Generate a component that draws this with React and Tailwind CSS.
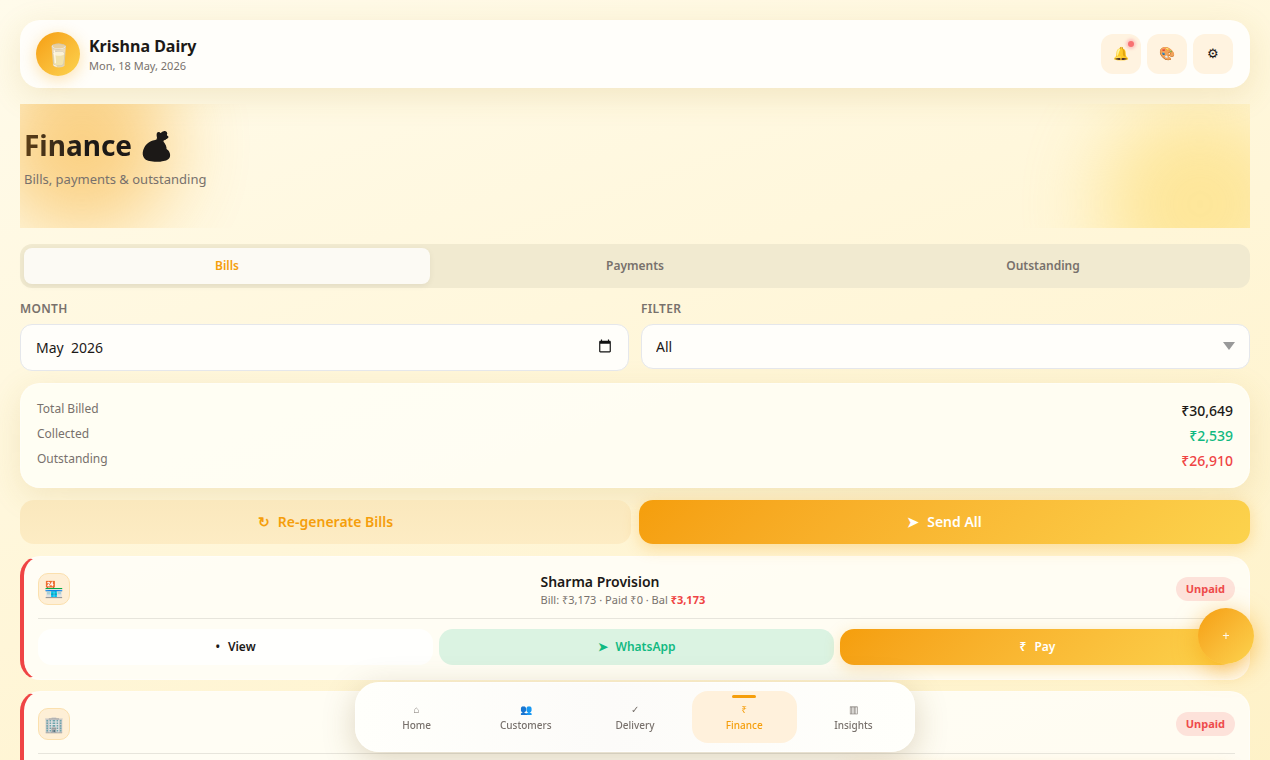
import React, { useState } from 'react';

const tabs = ['Bills', 'Payments', 'Outstanding'];

const totals = [
    { label: 'Total Billed', value: '₹30,649', color: 'text-[#1c1917]' },
    { label: 'Collected', value: '₹2,539', color: 'text-[#10b981]' },
    { label: 'Outstanding', value: '₹26,910', color: 'text-[#ef4444]' },
];

const bills = [
    { id: 1, icon: '🏪', name: 'Sharma Provision', bill: '₹3,173', paid: '₹0', balance: '₹3,173' },
    { id: 2, icon: '🏢' },
];

const navItems = [
    { icon: '⌂', label: 'Home' },
    { icon: '👥', label: 'Customers' },
    { icon: '✓', label: 'Delivery' },
    { icon: '₹', label: 'Finance', active: true },
    { icon: '▥', label: 'Insights' },
];

const Header = () => (
    <header className="flex items-center justify-between rounded-[20px] bg-[#fffefa] py-3 pl-4 pr-[17px] shadow-[0_8px_32px_rgba(180,140,40,0.16)]">
        <div className="flex items-center gap-[9px]">
            <div className="flex size-11 items-center justify-center rounded-full bg-linear-135 from-[#f59e0b] to-[#fcd34d] text-[22px] shadow-[0_4px_16px_rgba(245,158,11,0.3)]">
                <span className="opacity-90">🥛</span>
            </div>
            <div>
                <div className="text-base leading-6 font-bold">Krishna Dairy</div>
                <div className="text-[11px] leading-4 text-[#78716c]">Mon, 18 May, 2026</div>
            </div>
        </div>
        <div className="flex gap-1.5">
            <button aria-label="Notifications" className="relative size-10 rounded-xl bg-[#fff3e0] text-[13px]">
                🔔
                <span className="absolute top-[7px] right-[7px] size-1.5 rounded-full bg-[#f87171] shadow-[0_0_3px_2px_rgba(244,63,94,0.25)]"></span>
            </button>
            <button aria-label="Theme" className="size-10 rounded-xl bg-[#fff3e0] text-[13px]">🎨</button>
            <button aria-label="Settings" className="size-10 rounded-xl bg-[#fff3e0] text-[13px]">⚙</button>
        </div>
    </header>
);

const Hero = () => (
    <section className="relative mt-4 h-[124px] overflow-hidden px-1 pt-5">
        {/* Soft colour blobs */}
        <div className="absolute -top-[50px] -left-7 size-[180px] rounded-full bg-[#f59e0b] opacity-45 blur-[40px]"></div>
        <div className="absolute top-0 -right-[50px] size-[200px] rounded-full bg-[#fcd34d] opacity-45 blur-[40px]"></div>
        <div className="relative">
            <h1 className="w-fit bg-linear-to-r from-[#5f4015] to-[#1c1917] to-40% bg-clip-text text-[28px] leading-[42px] font-bold text-transparent">Finance 💰</h1>
            <p className="mt-[3px] text-[13px] leading-5 text-[#78716c]">Bills, payments &amp; outstanding</p>
        </div>
    </section>
);

const BillCard = ({ bill }) => (
    <article className="rounded-[20px] border border-l-4 border-white/40 border-l-[#ef4444] bg-[#fffefa]/85 p-3.5">
        <div className="flex h-9 items-center justify-between">
            <div className="flex size-8 items-center justify-center rounded-[10px] border border-[#fbe0ae] bg-[#feefd6] text-base">{bill.icon}</div>
            {bill.name && (
                <div className="pt-0.5">
                    <div className="text-sm leading-5 font-semibold">{bill.name}</div>
                    <div className="text-[11px] leading-4 text-[#78716c]">
                        Bill: {bill.bill} · Paid {bill.paid} · Bal <strong className="font-bold text-[#ef4444]">{bill.balance}</strong>
                    </div>
                </div>
            )}
            <span className="rounded-full bg-[#fde2da] px-2.5 py-1 text-[11px] leading-4 font-bold text-[#ee4b4b]">Unpaid</span>
        </div>
        <div className="mt-[11px] grid grid-cols-3 gap-1.5 border-t border-[#e7e5dc] pt-2.5 text-xs font-semibold">
            <button className="flex h-9 items-center justify-center gap-2 rounded-[14px] bg-[#fffffd]"><span>•</span>View</button>
            <button className="flex h-9 items-center justify-center gap-2 rounded-[14px] bg-[#dbf3e2] text-[#10b981]"><span>➤</span>WhatsApp</button>
            <button className="flex h-9 items-center justify-center gap-2 rounded-[14px] bg-linear-135 from-[#f59e0b] to-[#fcd34d] text-white shadow-[0_4px_16px_rgba(245,158,11,0.25)]"><span>₹</span>Pay</button>
        </div>
    </article>
);

const BottomNav = () => (
    <nav className="fixed bottom-2 left-1/2 flex w-[560px] max-w-full -translate-x-1/2 gap-1 rounded-3xl border border-white/60 bg-linear-to-r from-[#fffffb] via-[#fcfbf9] via-45% to-[#fffffb] p-2 shadow-[0_8px_32px_rgba(120,90,40,0.25)]">
        {navItems.map((item) => (
            <a
                key={item.label}
                href={'#' + item.label.toLowerCase()}
                className={`relative flex h-[52px] flex-1 flex-col items-center justify-center rounded-2xl text-[10px] leading-4 ${item.active ? 'bg-[#fff1dc] text-[#f59e0b]' : 'text-[#78716c]'}`}
            >
                {item.active && <span className="absolute top-1 h-[3px] w-6 rounded-full bg-[#f59e0b]"></span>}
                <span>{item.icon}</span>
                <span className="font-medium">{item.label}</span>
            </a>
        ))}
    </nav>
);

const App = () => {
    const [tab, setTab] = useState('Bills');
    const [month, setMonth] = useState('May  2026');

    return (
        <div className="min-h-screen bg-linear-160 from-[#fffbeb] via-[#fff6d8] via-50% to-[#fef1c6] p-5 font-['Noto_Sans',sans-serif] text-[#1c1917]">
            <Header />
            <Hero />

            <div className="mt-4 grid grid-cols-3 gap-0.5 rounded-xl bg-[#f1ead0] p-1 text-xs font-semibold">
                {tabs.map((name) => (
                    <button
                        key={name}
                        onClick={() => setTab(name)}
                        className={`h-9 rounded-lg ${tab === name ? 'bg-[#fcfaf4] text-[#f59e0b] shadow-[0_2px_6px_rgba(0,0,0,0.06)]' : 'text-[#78716c]'}`}
                    >
                        {name}
                    </button>
                ))}
            </div>

            <div className="mt-3 grid grid-cols-2 items-start gap-3">
                <div>
                    <label htmlFor="month" className="mb-1.5 block text-xs leading-[18px] font-semibold tracking-wide text-[#78716c] uppercase">Month</label>
                    <div className="relative">
                        <input
                            id="month"
                            type="text"
                            value={month}
                            onChange={(e) => setMonth(e.target.value)}
                            className="block h-[47px] w-full rounded-xl border border-gray-200 bg-[#fffefa] px-[15px] text-sm"
                        />
                        <svg className="pointer-events-none absolute top-[15px] right-[17px]" width="14" height="14" viewBox="0 0 24 24" fill="#111">
                            <path d="M20 3h-1V1h-2v2H7V1H5v2H4c-1.1 0-2 .9-2 2v16c0 1.1.9 2 2 2h16c1.1 0 2-.9 2-2V5c0-1.1-.9-2-2-2zm0 18H4V8h16v13z" />
                        </svg>
                    </div>
                </div>
                <div>
                    <label htmlFor="filter" className="mb-1.5 block text-xs leading-[18px] font-semibold tracking-wide text-[#78716c] uppercase">Filter</label>
                    <div className="relative">
                        <select id="filter" className="block h-[45px] w-full appearance-none rounded-xl border border-gray-200 bg-[#fffefa] px-3.5 text-sm">
                            <option>All</option>
                            <option>Paid</option>
                            <option>Unpaid</option>
                        </select>
                        <svg className="pointer-events-none absolute top-[18px] right-[15px]" width="12" height="8" viewBox="0 0 12 8">
                            <path d="M0 0h12L6 8z" fill="#999" />
                        </svg>
                    </div>
                </div>
            </div>

            <section className="mt-3 space-y-1 rounded-[20px] border border-white/40 bg-[#fffef5]/90 p-4 shadow-[0_8px_32px_rgba(180,140,40,0.16)]">
                {totals.map((row) => (
                    <div key={row.label} className="flex items-start justify-between">
                        <span className="text-xs leading-[18px] text-[#78716c]">{row.label}</span>
                        <span className={`text-sm leading-[21px] font-medium ${row.color}`}>{row.value}</span>
                    </div>
                ))}
            </section>

            <div className="mt-3 grid grid-cols-2 gap-2 text-sm font-semibold">
                <button className="flex h-11 items-center justify-center gap-2 rounded-[14px] bg-linear-to-b from-[#fae8bd] to-[#fdecc4] text-[#f59e0b]"><span>↻</span>Re-generate Bills</button>
                <button className="flex h-11 items-center justify-center gap-2 rounded-[14px] bg-linear-135 from-[#f59e0b] to-[#fcd34d] text-white shadow-[0_4px_16px_rgba(245,158,11,0.3)]"><span>➤</span>Send All</button>
            </div>

            <div className="mt-3 space-y-[11px]">
                {bills.map((bill) => (
                    <BillCard key={bill.id} bill={bill} />
                ))}
            </div>

            <button aria-label="Add" className="fixed right-4 bottom-24 size-14 rounded-full bg-linear-135 from-[#f59e0b] to-[#fcd34d] text-[13px] text-white/90 shadow-[0_6px_24px_rgba(245,158,11,0.6)]">+</button>
            <BottomNav />
        </div>
    );
};

export default App;
